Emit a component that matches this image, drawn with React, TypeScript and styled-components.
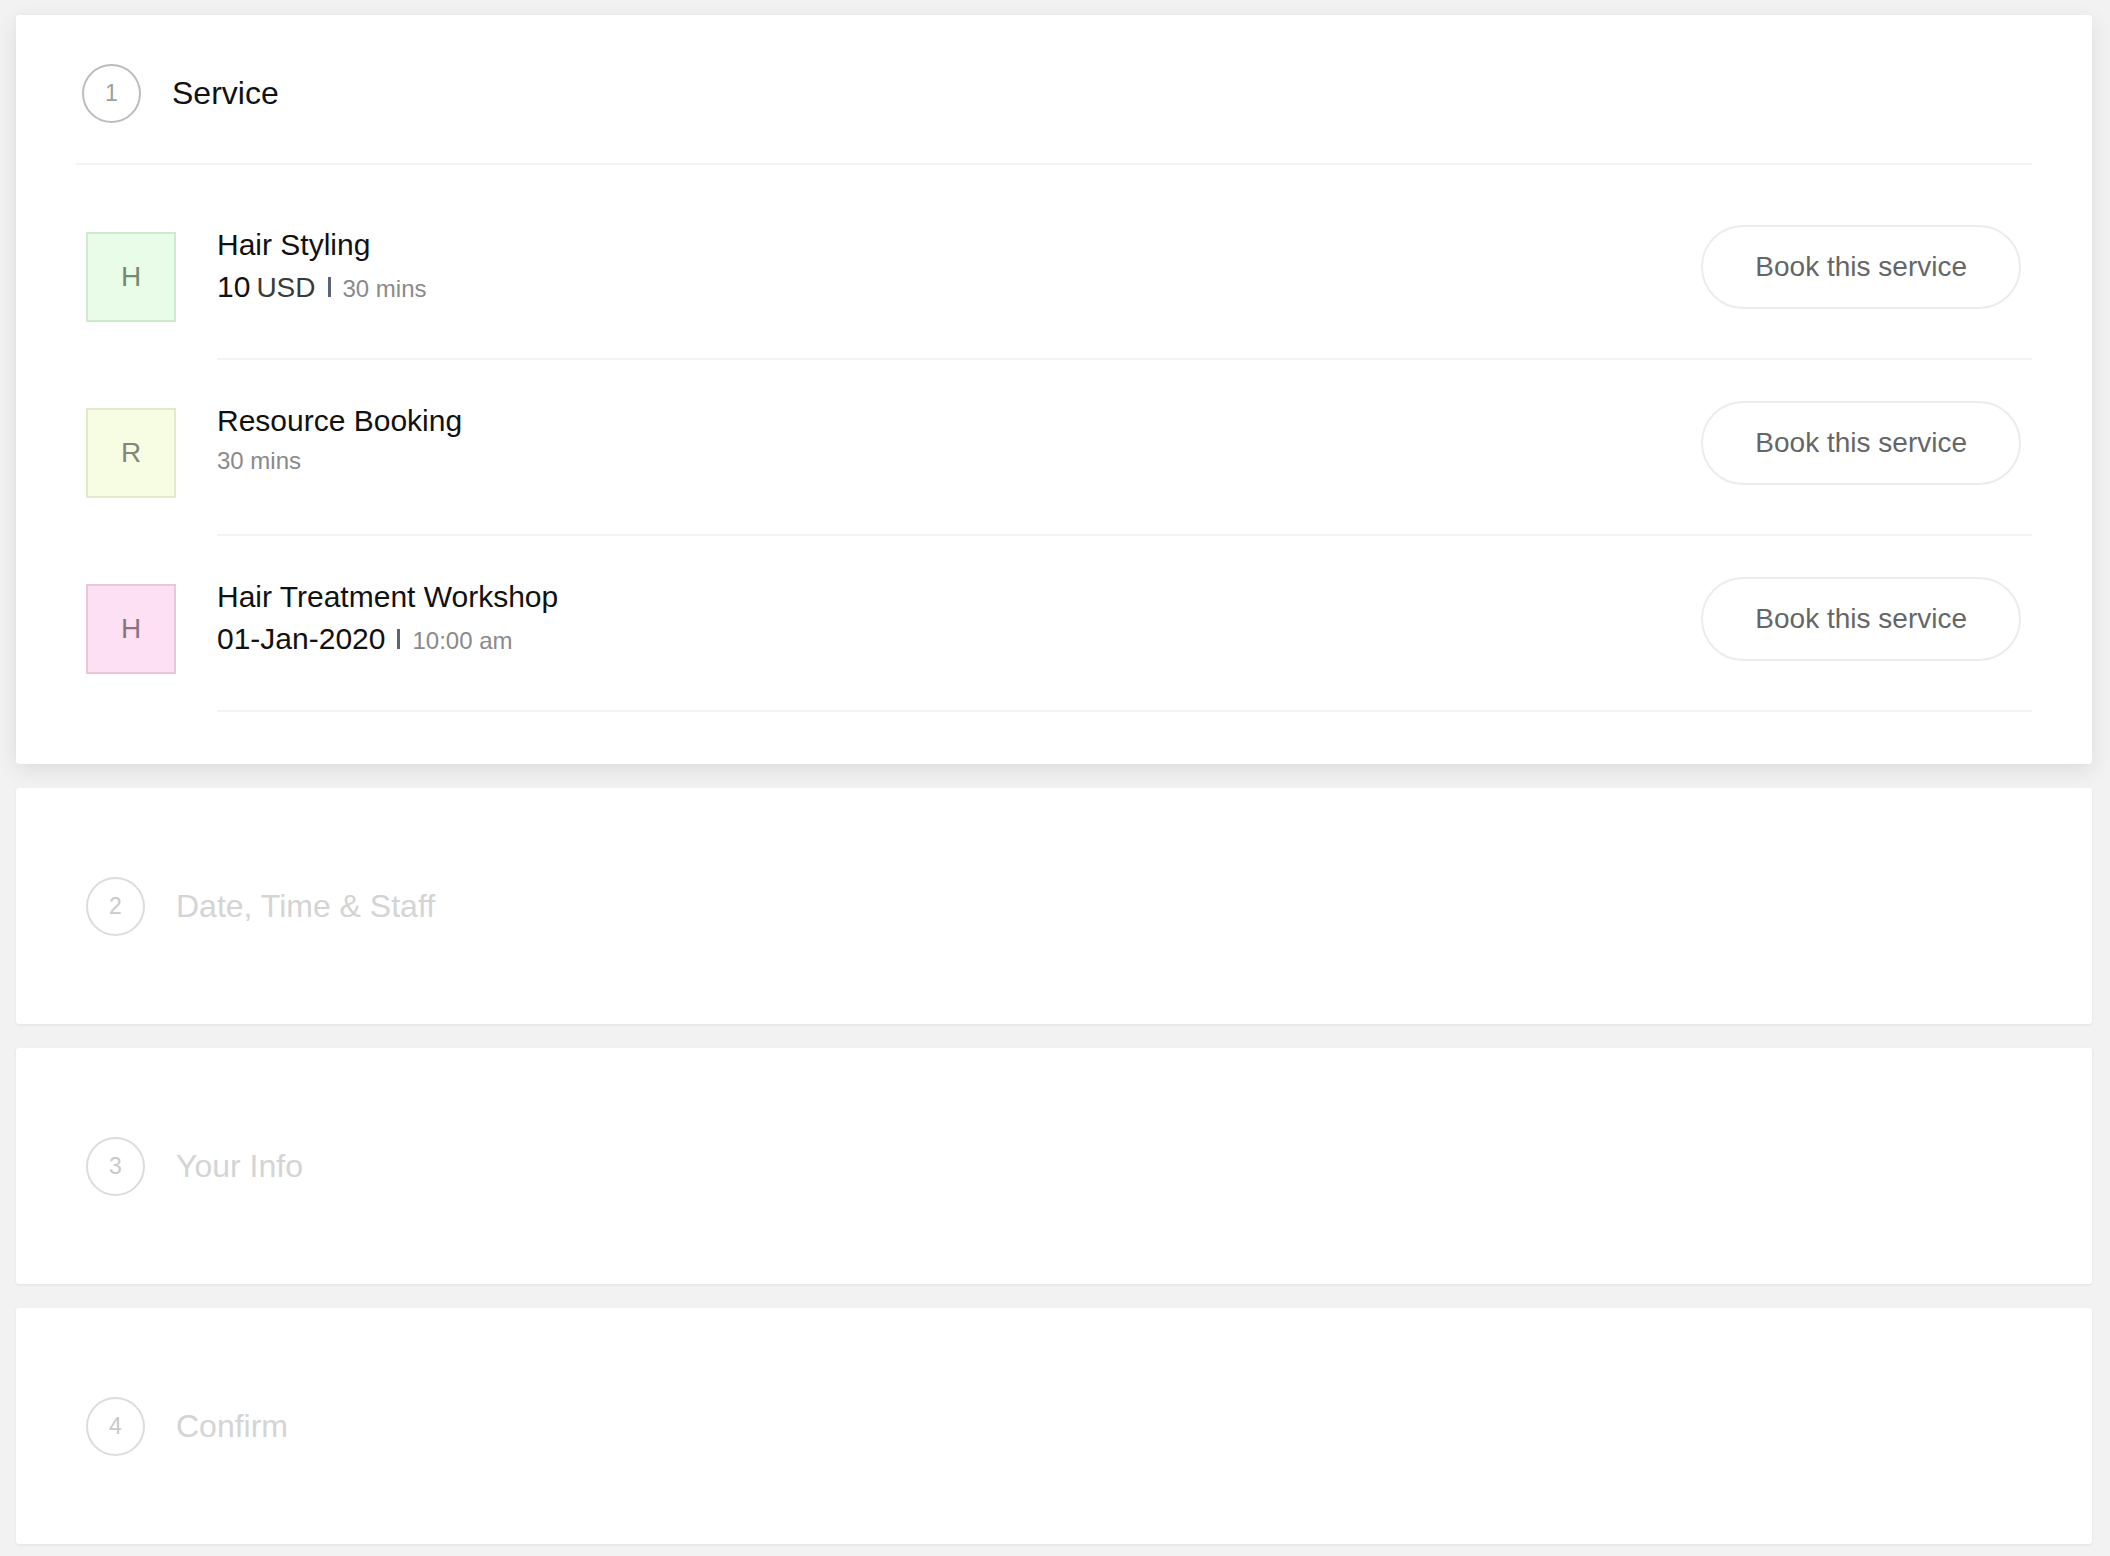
import React from "react";
import styled, { createGlobalStyle } from "styled-components";

const GlobalStyle = createGlobalStyle`
  html, body {
    margin: 0;
    padding: 0;
    background: #f2f2f2;
  }
  body {
    font-family: "Liberation Sans", Arial, Helvetica, sans-serif;
    color: #111;
  }
`;

const Page = styled.div`
  display: flex;
  flex-direction: column;
  gap: 24px;
  padding: 15px 18px 12px 16px;
  min-height: 100vh;
  box-sizing: border-box;
`;

const Card = styled.section<{ $active?: boolean }>`
  background: #fff;
  border-radius: 3px;
  box-shadow: ${(p) =>
    p.$active
      ? "0 6px 22px rgba(0, 0, 0, 0.09), 0 0 2px rgba(0, 0, 0, 0.04)"
      : "0 1px 3px rgba(0, 0, 0, 0.07)"};
`;

const ActiveBody = styled.div`
  padding: 0 60px 52px 60px;
`;

const StepHeader = styled.div`
  display: flex;
  align-items: center;
  padding: 49px 0 40px 6px;
  border-bottom: 2px solid #f3f3f3;
`;

const CollapsedStep = styled.div`
  display: flex;
  align-items: center;
  height: 236px;
  padding-left: 70px;
`;

const StepNumber = styled.div<{ $active?: boolean }>`
  width: 55px;
  height: 55px;
  flex: none;
  border-radius: 50%;
  border: 2px solid ${(p) => (p.$active ? "#bcbcbc" : "#dcdcdc")};
  display: flex;
  align-items: center;
  justify-content: center;
  font-size: 23px;
  color: ${(p) => (p.$active ? "#9e9e9e" : "#c9c9c9")};
`;

const StepTitle = styled.div<{ $active?: boolean }>`
  margin-left: 31px;
  font-size: 32px;
  color: ${(p) => (p.$active ? "#111" : "#d4d4d4")};
`;

const ServiceList = styled.div`
  padding-top: 19px;
`;

const ServiceRow = styled.div`
  display: flex;
  align-items: flex-start;
  padding-left: 10px;
`;

const Avatar = styled.div<{ $bg: string; $border: string; $fg: string }>`
  width: 86px;
  height: 86px;
  flex: none;
  margin-top: 48px;
  background: ${(p) => p.$bg};
  border: 2px solid ${(p) => p.$border};
  color: ${(p) => p.$fg};
  display: flex;
  align-items: center;
  justify-content: center;
  font-size: 28px;
`;

const RowBody = styled.div`
  flex: 1;
  display: flex;
  align-items: center;
  height: 176px;
  box-sizing: border-box;
  margin-left: 41px;
  padding: 40px 11px 48px 0;
  border-bottom: 2px solid #f3f3f3;
`;

const Info = styled.div`
  flex: 1;
  align-self: flex-start;
  margin-top: 3px;
`;

const ServiceName = styled.div`
  font-size: 30px;
  line-height: 36px;
  color: #111;
`;

const Meta = styled.div<{ $large?: boolean }>`
  display: flex;
  align-items: baseline;
  margin-top: 6px;
  line-height: ${(p) => (p.$large ? "36px" : "32px")};
`;

const Strong = styled.span`
  font-size: 30px;
  color: #111;
`;

const Unit = styled.span`
  font-size: 28px;
  color: #3a3a3a;
  margin-left: 6px;
`;

const Bar = styled.span`
  display: inline-block;
  width: 3px;
  height: 20px;
  background: #5d6574;
  margin: 0 12px;
`;

const Muted = styled.span`
  font-size: 24px;
  color: #8a8a8a;
`;

const BookButton = styled.button`
  flex: none;
  height: 84px;
  padding: 0 52px;
  border: 2px solid #ececec;
  border-radius: 42px;
  background: #fff;
  font-family: inherit;
  font-size: 28px;
  color: #666;
  cursor: pointer;
`;

type Service = {
  letter: string;
  name: string;
  bg: string;
  border: string;
  fg: string;
  main?: string;
  unit?: string;
  detail: string;
};

const services: Service[] = [
  {
    letter: "H",
    name: "Hair Styling",
    bg: "#e8fce8",
    border: "#cfe9cf",
    fg: "#768876",
    main: "10",
    unit: "USD",
    detail: "30 mins",
  },
  {
    letter: "R",
    name: "Resource Booking",
    bg: "#f6fde3",
    border: "#e3e9cc",
    fg: "#83867a",
    detail: "30 mins",
  },
  {
    letter: "H",
    name: "Hair Treatment Workshop",
    bg: "#fde0f3",
    border: "#e9c7da",
    fg: "#86777f",
    main: "01-Jan-2020",
    detail: "10:00 am",
  },
];

const steps = ["Date, Time & Staff", "Your Info", "Confirm"];

const App: React.FC = () => {
  return (
    <>
      <GlobalStyle />
      <Page>
        <Card $active>
          <ActiveBody>
            <StepHeader>
              <StepNumber $active>1</StepNumber>
              <StepTitle $active>Service</StepTitle>
            </StepHeader>
            <ServiceList>
              {services.map((s) => (
                <ServiceRow key={s.name}>
                  <Avatar $bg={s.bg} $border={s.border} $fg={s.fg}>
                    {s.letter}
                  </Avatar>
                  <RowBody>
                    <Info>
                      <ServiceName>{s.name}</ServiceName>
                      {s.main ? (
                        <Meta $large>
                          <Strong>{s.main}</Strong>
                          {s.unit && <Unit>{s.unit}</Unit>}
                          <Bar />
                          <Muted>{s.detail}</Muted>
                        </Meta>
                      ) : (
                        <Meta>
                          <Muted>{s.detail}</Muted>
                        </Meta>
                      )}
                    </Info>
                    <BookButton>Book this service</BookButton>
                  </RowBody>
                </ServiceRow>
              ))}
            </ServiceList>
          </ActiveBody>
        </Card>
        {steps.map((title, i) => (
          <Card key={title}>
            <CollapsedStep>
              <StepNumber>{i + 2}</StepNumber>
              <StepTitle>{title}</StepTitle>
            </CollapsedStep>
          </Card>
        ))}
      </Page>
    </>
  );
};

export default App;
